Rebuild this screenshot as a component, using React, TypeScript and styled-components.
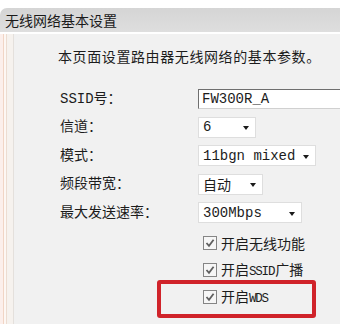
import { FunctionComponent } from "react";
import styled, { createGlobalStyle } from "styled-components";

const GlobalStyle = createGlobalStyle`
  html, body {
    margin: 0;
    padding: 0;
    background: #ffffff;
  }
  body {
    font-family: "Liberation Mono", "Noto Sans CJK SC", monospace;
    color: #1c1c1c;
  }
`;

type SelectField = {
  label: string;
  value: string;
  width: number;
};

const selectFields: SelectField[] = [
  { label: "信道：", value: "6", width: 58 },
  { label: "模式：", value: "11bgn mixed", width: 118 },
  { label: "频段带宽：", value: "自动", width: 65 },
  { label: "最大发送速率：", value: "300Mbps", width: 104 },
];

type CheckItem = {
  prefix: string;
  latin?: string;
  suffix?: string;
  highlighted?: boolean;
};

const checkItems: CheckItem[] = [
  { prefix: "开启无线功能" },
  { prefix: "开启", latin: "SSID", suffix: "广播" },
  { prefix: "开启", latin: "WDS", highlighted: true },
];

const CheckMark = () => (
  <svg width="10" height="10" viewBox="0 0 10 10">
    <path
      d="M1.5 5 L4 7.8 L8.6 1.8"
      fill="none"
      stroke="#5f5f5f"
      strokeWidth="1.8"
    />
  </svg>
);

const App: FunctionComponent = () => {
  return (
    <>
      <GlobalStyle />
      <Page>
        <HeaderBar>无线网络基本设置</HeaderBar>
        <Panel>
          <IntroText>本页面设置路由器无线网络的基本参数。</IntroText>

          <FormGrid>
            <FieldLabel>SSID号：</FieldLabel>
            <TextInput>FW300R_A</TextInput>

            {selectFields.map((field) => (
              <FieldRow key={field.label}>
                <FieldLabel>{field.label}</FieldLabel>
                <SelectBox width={field.width}>
                  <span>{field.value}</span>
                  <SelectArrow />
                </SelectBox>
              </FieldRow>
            ))}
          </FormGrid>

          <CheckList>
            {checkItems.map((item) => (
              <CheckRow key={item.prefix + (item.latin ?? "")}>
                <CheckBox>
                  <CheckMark />
                </CheckBox>
                <CheckText>
                  {item.prefix}
                  {item.latin && <LatinText>{item.latin}</LatinText>}
                  {item.suffix}
                </CheckText>
                {item.highlighted && <Highlight />}
              </CheckRow>
            ))}
          </CheckList>
        </Panel>
      </Page>
    </>
  );
};

export default App;

const Page = styled.div`
  width: 340px;
  height: 324px;
  padding-top: 8px;
  box-sizing: border-box;
  overflow: hidden;
  background: #ffffff;
`;

const HeaderBar = styled.div`
  height: 24px;
  padding-left: 5px;

  border-radius: 7px 0 0 0;
  background: linear-gradient(to bottom, #d5d5d5, #dedede);

  font-family: "Noto Sans CJK SC", sans-serif;
  font-size: 14px;
  line-height: 24px;
  color: #1a1a1a;
`;

const Panel = styled.div`
  margin-top: 2px;
  height: 290px;
  padding: 12px 0 0 58px;
  box-sizing: border-box;

  background: linear-gradient(
    to right,
    #fcefeb 0 3px,
    #f1d5c5 3px 4px,
    #fdf7f3 4px 6px,
    #eddcd1 6px 7px,
    #f6f2ee 7px 13px,
    #e4e0dc 13px 14px,
    #f1f1f1 14px
  );
`;

const IntroText = styled.div`
  height: 20px;

  font-family: "Noto Sans CJK SC", sans-serif;
  font-size: 14px;
  line-height: 20px;
  letter-spacing: 0.6px;
`;

const FormGrid = styled.div`
  margin-top: 22px;

  display: grid;
  grid-template-columns: 140px auto;
  grid-auto-rows: 21px;
  row-gap: 7.5px;
  align-items: center;
`;

const FieldRow = styled.div`
  display: contents;
`;

const FieldLabel = styled.span`
  padding-left: 2px;

  font-size: 14px;
  line-height: 20px;
  white-space: nowrap;
`;

const TextInput = styled.div`
  width: 160px;
  height: 20px;
  padding-left: 3px;
  box-sizing: border-box;

  border: 1px solid #6f6f6f;
  border-right: none;
  border-bottom-color: #d0d0d0;
  background: #ffffff;

  font-size: 14px;
  line-height: 18px;
`;

const SelectBox = styled.div<{ width: number }>`
  width: ${({ width }) => width}px;
  height: 21px;
  padding: 0 6px 0 4px;
  box-sizing: border-box;

  display: flex;
  align-items: center;
  justify-content: space-between;

  border: 1px solid #dedede;
  background: #ffffff;

  font-size: 14px;
  white-space: nowrap;
`;

const SelectArrow = styled.span`
  width: 0;
  height: 0;
  margin-top: 2px;

  border-left: 3.5px solid transparent;
  border-right: 3.5px solid transparent;
  border-top: 4px solid #1a1a1a;
`;

const CheckList = styled.div`
  margin-top: 6.5px;

  display: flex;
  flex-direction: column;
`;

const CheckRow = styled.div`
  position: relative;
  height: 27px;
  margin-left: 145px;
  width: 110px;

  display: flex;
  align-items: center;
  gap: 4px;
`;

const CheckBox = styled.span`
  width: 14px;
  height: 14px;
  box-sizing: border-box;

  display: flex;
  align-items: center;
  justify-content: center;

  border: 1px solid #858585;
  background: #f6f6f6;
`;

const CheckText = styled.span`
  font-family: "Noto Sans CJK SC", sans-serif;
  font-size: 14px;
  line-height: 20px;
  white-space: nowrap;
`;

const LatinText = styled.span`
  font-family: "Liberation Mono", monospace;
  font-size: 12.5px;
  letter-spacing: -1.2px;
  margin-right: 1px;
`;

const Highlight = styled.span`
  position: absolute;
  left: -46px;
  top: -4px;
  width: 159px;
  height: 38px;
  box-sizing: border-box;

  border: 4px solid #d0232a;
  border-radius: 3px;
  pointer-events: none;
`;
